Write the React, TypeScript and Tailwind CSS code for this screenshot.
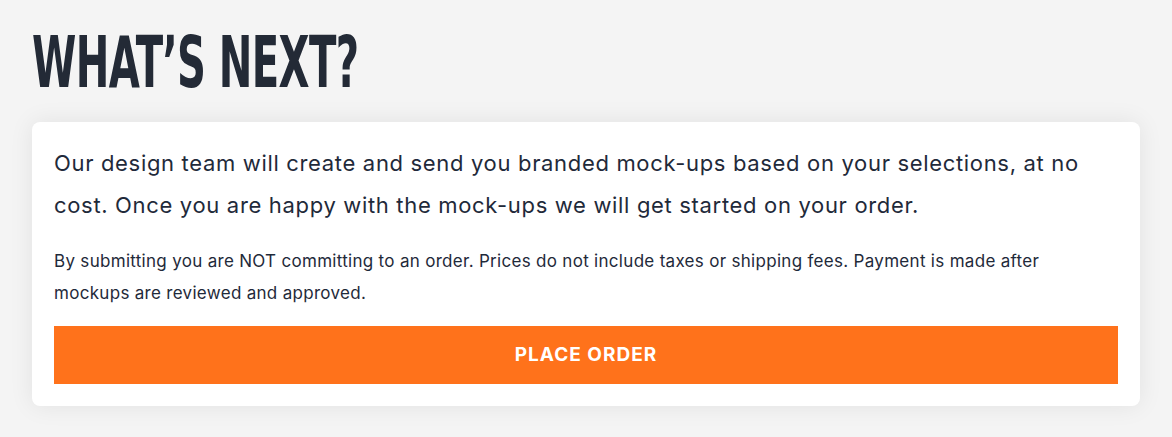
import React from "react";

const body = { fontFamily: "Inter, 'Noto Sans', sans-serif" };

export default function App() {
  return (
    <div className="min-h-[437px] w-full bg-[#f4f4f4] px-8 pt-[26px]">
      <h1
        className="inline-block origin-left scale-x-[0.62] text-[72px] font-bold uppercase leading-none text-[#232a36] tracking-[-1px]"
        style={{ fontFamily: "'DejaVu Sans Condensed', sans-serif" }}
      >
        What’s Next?
      </h1>
      <div
        className="mt-[24px] rounded-lg bg-white px-[22px] pt-[20px] pb-[22px] shadow-[0_0_24px_rgba(0,0,0,0.08)]"
        style={body}
      >
        <p className="text-[22px] leading-[42px] tracking-[0.67px] text-[#1f2a3a]">
          Our design team will create and send you branded mock-ups based on your selections, at no cost. Once you are
          happy with the mock-ups we will get started on your order.
        </p>
        <p className="mt-[19px] text-[17px] leading-[32px] tracking-[0.3px] text-[#1f2a3a]">
          By submitting you are NOT committing to an order. Prices do not include taxes or shipping fees. Payment is
          made after mockups are reviewed and approved.
        </p>
        <button className="mt-[17px] flex h-[58px] w-full items-center justify-center bg-[#ff721b] text-[19px] font-bold uppercase tracking-[1px] text-white">
          Place Order
        </button>
      </div>
    </div>
  );
}
